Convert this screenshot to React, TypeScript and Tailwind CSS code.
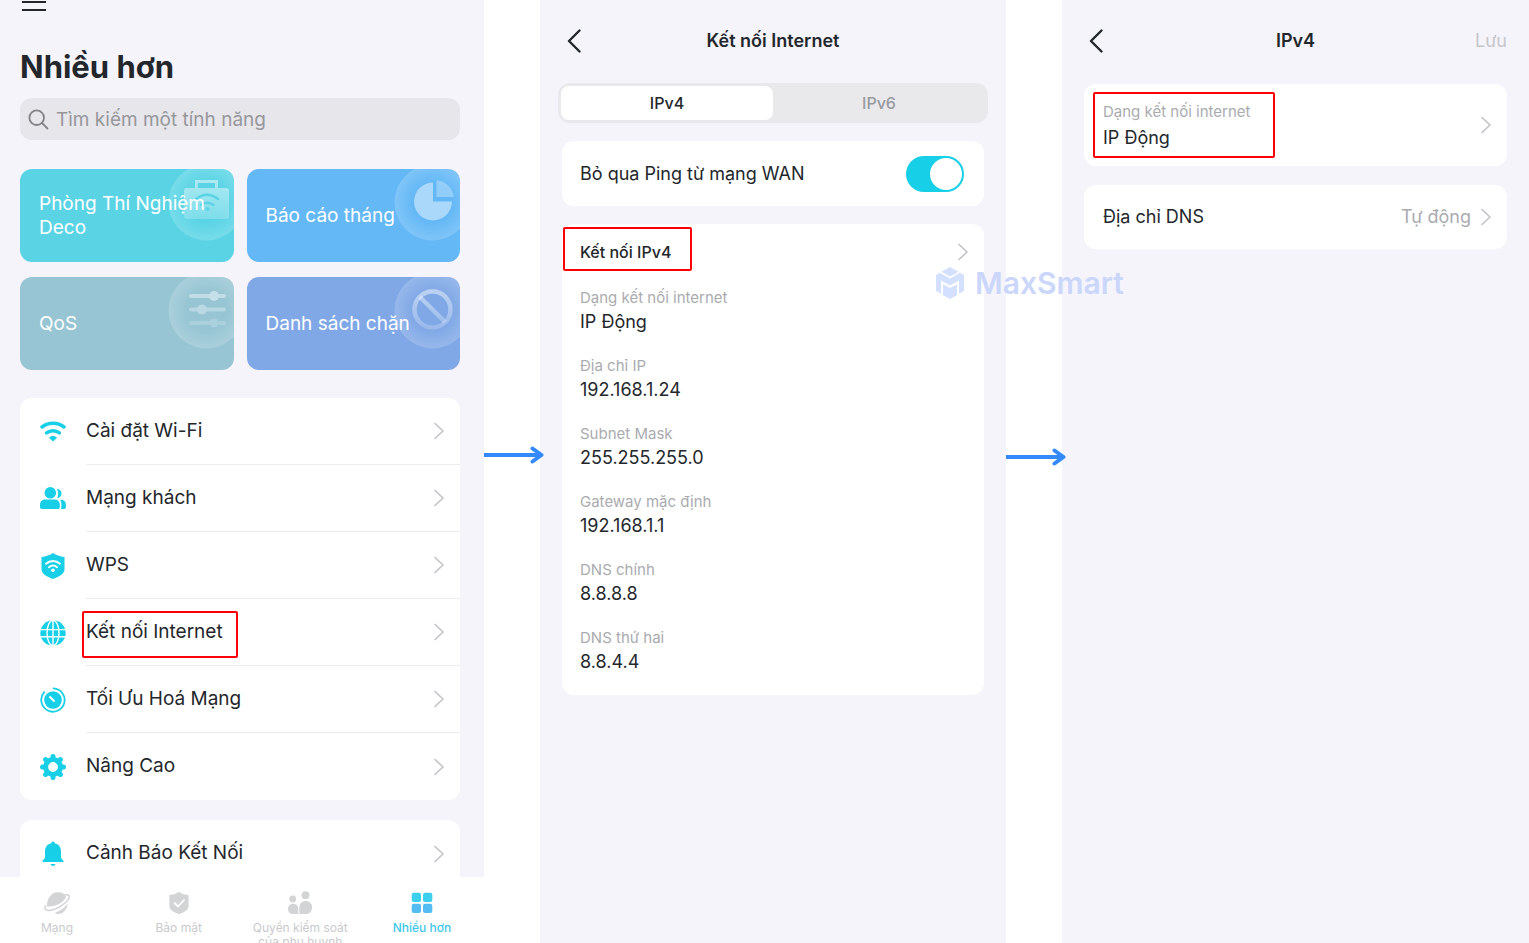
import { useState } from 'react';
import type { ReactNode } from 'react';
import clsx from 'clsx';

const Chevron = () => (
    <svg viewBox="0 0 10 18" className="w-2.5 h-[18px] shrink-0" fill="none" stroke="#c4c4c8" strokeWidth="1.7" aria-hidden="true">
        <path d="M1 1.500 9 9l-8 7.500" strokeLinecap="round" strokeLinejoin="round" />
    </svg>
);

const BackIcon = () => (
    <svg viewBox="0 0 14 24" className="w-3.5 h-6" fill="none" stroke="#23272b" strokeWidth="2.4" aria-hidden="true">
        <path d="M12.500 1.500 2 12l10.500 10.500" strokeLinecap="round" strokeLinejoin="round" />
    </svg>
);

const Arrow = () => (
    <svg viewBox="0 0 60 18" className="w-[60px] h-[18px] shrink-0" fill="none" stroke="#348afd" strokeWidth="4" aria-hidden="true">
        <path d="M0 9h56" />
        <path d="M48.500 2.500 57.500 9l-9 6.500" strokeLinecap="round" strokeLinejoin="round" />
    </svg>
);

/* Red marker drawn over the step to follow */
const Marker = ({ className }: { className: string }) => (
    <span className={clsx('absolute border-2 border-[#fb0007] rounded-[2px] pointer-events-none', className)} />
);

/* ---------- Row icons ---------- */

const RowIcon = ({ children }: { children: ReactNode }) => (
    <svg viewBox="0 0 26 26" className="w-[26px] h-[26px] shrink-0" fill="#17cfe6" aria-hidden="true">
        {children}
    </svg>
);

const WifiIcon = () => (
    <RowIcon>
        <g fill="none" stroke="#17cfe6" strokeWidth="3.500" strokeLinecap="round">
            <path d="M2 8c6.400-5 15.600-5 22 0" />
            <path d="M6.600 13.800c3.700-2.900 9.100-2.900 12.800 0" />
        </g>
        <path d="M9 18.800c2.300-2.300 5.700-2.300 8 0L13 22.500z" />
    </RowIcon>
);

const GuestIcon = () => (
    <RowIcon>
        <circle cx="10.300" cy="6.800" r="5.800" />
        <path d="M0 18.700C0 15.200 2.500 13.400 5.500 13.400h9c3 0 5.300 1.800 5.300 5.300V21c0 1.200-.6 1.900-1.800 1.900H1.800C.6 22.900 0 22.200 0 21z" />
        <path d="M16.800 2.800c2.700.2 4.700 2 4.700 4.600s-1.800 4.600-4.500 4.900c1.600-3 1.800-6.200-.2-9.500z" />
        <path d="M20 13.800c3.600-.2 5.900 1.700 5.900 4.900V21c0 1.200-.6 1.900-1.800 1.900H21c.6-3 .9-6.500-1-9.100z" />
    </RowIcon>
);

const WpsIcon = () => (
    <RowIcon>
        <path d="M13 0c3 2 7 3.500 11.500 3.900v12.600c0 4.500-6 7.500-11.500 9.500-5.500-2-11.500-5-11.500-9.500V3.900C6 3.500 10 2 13 0z" />
        <g fill="none" stroke="#fff" strokeWidth="2" strokeLinecap="round">
            <path d="M6 10.700c4.100-3.700 9.900-3.700 14 0" />
            <path d="M9 14.200c2.400-2.100 5.600-2.100 8 0" />
        </g>
        <circle cx="13" cy="17.300" r="1.800" fill="#fff" />
    </RowIcon>
);

const GlobeIcon = () => (
    <RowIcon>
        <circle cx="13" cy="13" r="12.700" />
        <g fill="none" stroke="#fff" strokeWidth="1.400">
            <ellipse cx="13" cy="13" rx="6" ry="12.800" />
            <path d="M13 0v26M0 9.600h26M0 16.800h26" />
        </g>
    </RowIcon>
);

const OptimizeIcon = () => (
    <RowIcon>
        <circle cx="13" cy="13" r="8.800" />
        <path d="M4.200 5.200A11.700 11.700 0 1 0 13.500 1.300" fill="none" stroke="#17cfe6" strokeWidth="1.800" strokeLinecap="round" />
        <path d="m10 10 4 4" stroke="#fff" strokeWidth="1.900" strokeLinecap="round" />
    </RowIcon>
);

const GearIcon = () => (
    <RowIcon>
        <circle cx="13" cy="13" r="7.400" fill="none" stroke="#17cfe6" strokeWidth="5" />
        <path
            d="M13 2.500v3M13 20.500v3M2.500 13h3M20.500 13h3M5.600 5.600l2.200 2.200M18.200 18.200l2.200 2.200M5.600 20.400l2.200-2.200M18.200 7.800l2.200-2.200"
            stroke="#17cfe6"
            strokeWidth="5"
            strokeLinecap="round"
        />
    </RowIcon>
);

const BellIcon = () => (
    <RowIcon>
        <path d="M13 .5c1 0 1.700.7 1.700 1.700 4 .9 6.300 3.900 6.300 8.300v6c0 1.500 2.600 2.500 2.600 4 0 .4-.3.600-.8.600H3.200c-.5 0-.8-.2-.8-.6 0-1.500 2.600-2.500 2.600-4v-6c0-4.400 2.300-7.400 6.300-8.300 0-1 .7-1.700 1.700-1.700z" />
        <path d="M10.500 23h5c-.4 1.300-1.200 2-2.500 2s-2.100-.7-2.500-2z" />
    </RowIcon>
);

/* ---------- Feature tiles ---------- */

const TileArt = ({ id, children }: { id: string; children: ReactNode }) => (
    <svg viewBox="0 0 66 76" className="absolute top-0 right-0 w-[66px] h-[76px]" fill="none" aria-hidden="true">
        <defs>
            <radialGradient id={id}>
                <stop offset="0.5" stopColor="#fff" stopOpacity="0" />
                <stop offset="1" stopColor="#fff" stopOpacity="0.18" />
            </radialGradient>
            <linearGradient id={`${id}-fade`} gradientUnits="userSpaceOnUse" x1="0" y1="10" x2="0" y2="52">
                <stop offset="0" stopColor="#fff" stopOpacity="0.5" />
                <stop offset="1" stopColor="#fff" stopOpacity="0.2" />
            </linearGradient>
        </defs>
        <circle cx="38.500" cy="33.500" r="38" fill={`url(#${id})`} />
        {children}
    </svg>
);

const tiles = [
    {
        label: 'Phòng Thí Nghiệm Deco',
        color: 'bg-[#5ad4e5]',
        art: (
            <TileArt id="lab">
                <path d="M28.500 19v-6.500h20V19" stroke="url(#lab-fade)" strokeWidth="3" />
                <rect x="16" y="19" width="45" height="31" rx="3" fill="url(#lab-fade)" />
                <g stroke="#5ad4e5" strokeWidth="2.500" strokeLinecap="round">
                    <path d="M28 30c7-5.500 15-5.500 22 0" />
                    <path d="M33 36c4-3 8.500-3 12.500 0" />
                </g>
                <circle cx="39.500" cy="40" r="2" fill="#5ad4e5" />
            </TileArt>
        ),
    },
    {
        label: 'Báo cáo tháng',
        color: 'bg-[#64b8f6]',
        art: (
            <TileArt id="report">
                <path d="M39 13.500A19 19 0 1 0 58 32.500H39z" fill="#fff" fillOpacity="0.45" />
                <path d="M42.500 11.500C51 11.500 59 19 59.500 28h-17z" fill="#fff" fillOpacity="0.3" />
            </TileArt>
        ),
    },
    {
        label: 'QoS',
        color: 'bg-[#97c5d3]',
        art: (
            <TileArt id="qos">
                <g stroke="#fff" strokeOpacity="0.4" strokeWidth="4" strokeLinecap="round">
                    <path d="M23 19h33" />
                    <path d="M23 32.500h33" strokeOpacity="0.3" />
                    <path d="M23 46h33" strokeOpacity="0.2" />
                </g>
                <circle cx="46" cy="19" r="5" fill="#c6e0ea" />
                <circle cx="34" cy="32.500" r="5" fill="#bad9e4" />
                <circle cx="46" cy="46" r="4.500" fill="#abd0de" />
            </TileArt>
        ),
    },
    {
        label: 'Danh sách chặn',
        color: 'bg-[#80a8e6]',
        art: (
            <TileArt id="block">
                <g stroke="url(#block-fade)" strokeWidth="4.500">
                    <circle cx="38.500" cy="32.500" r="18" />
                    <path d="m26 20 25 25" />
                </g>
            </TileArt>
        ),
    },
];

const features = [
    { label: 'Cài đặt Wi-Fi', icon: <WifiIcon /> },
    { label: 'Mạng khách', icon: <GuestIcon /> },
    { label: 'WPS', icon: <WpsIcon /> },
    { label: 'Kết nối Internet', icon: <GlobeIcon />, marked: true },
    { label: 'Tối Ưu Hoá Mạng', icon: <OptimizeIcon /> },
    { label: 'Nâng Cao', icon: <GearIcon /> },
];

interface FeatureRowProps {
    label: string;
    icon: ReactNode;
    marked?: boolean;
}

const FeatureRow = ({ label, icon, marked }: FeatureRowProps) => (
    <li className="group">
        <a href="#" className="flex items-center pl-5 gap-5">
            {icon}
            <span className="relative flex flex-1 items-center justify-between h-[67px] pr-4 border-b border-[#ececf0] group-last:border-b-0">
                {label}
                <Chevron />
                {marked && <Marker className="-left-1 top-3 w-[156px] h-[47px]" />}
            </span>
        </a>
    </li>
);

/* ---------- Bottom navigation ---------- */

const NavIcon = ({ children }: { children: ReactNode }) => (
    <svg viewBox="0 0 26 24" className="w-[26px] h-6" fill="#d3d4d6" aria-hidden="true">
        {children}
    </svg>
);

const navItems = [
    {
        label: 'Mạng',
        icon: (
            <NavIcon>
                <path d="M3.200 15.500C2.200 7.500 7.500 1.200 14 1.200c3.700 0 6.500 1.500 8.200 4C20.500 11 12 16 3.200 15.500z" />
                <path d="M11 21.700c5-1.500 10-5 12.500-9.200-.2 6-4.500 10.500-9.500 10.500-1.200 0-2.300-.4-3-1.300z" />
                <path d="M21.500 3.700c3-.2 4.500.9 3.500 3.300C23 12 12.500 19 5.500 19.400c-4.200.2-5.500-1.600-3.800-4.600" fill="none" stroke="#fff" strokeWidth="3.500" />
                <path d="M21.500 3.700c3-.2 4.500.9 3.500 3.300C23 12 12.500 19 5.500 19.400c-4.200.2-5.500-1.600-3.800-4.600" fill="none" stroke="#d3d4d6" strokeWidth="1.500" strokeLinecap="round" />
            </NavIcon>
        ),
    },
    {
        label: 'Bảo mật',
        icon: (
            <NavIcon>
                <path d="M13 1c3 2 6.500 2.800 9.600 3v11c0 4.200-5 6.700-9.600 8-4.600-1.300-9.600-3.800-9.600-8V4C6.500 3.800 10 3 13 1z" />
                <path d="m8.500 12 3.500 3.500 6-6.500" fill="none" stroke="#fff" strokeWidth="1.800" strokeLinecap="round" />
            </NavIcon>
        ),
    },
    {
        label: 'Quyền kiểm soát của phụ huynh',
        icon: (
            <NavIcon>
                <circle cx="18.500" cy="4.200" r="4" />
                <circle cx="5.700" cy="8" r="3.400" />
                <path d="M12.300 16.500c0-3.800 2.800-6.500 6.400-6.500s6.400 2.700 6.400 6.300-2.300 6.700-5.700 6.700h-7.100z" />
                <path d="M11.300 18c0-3-2-5.200-5-5.200S1 15 1 18s2 5 5 5h5.300z" />
            </NavIcon>
        ),
    },
    {
        label: 'Nhiều hơn',
        active: true,
        icon: (
            <NavIcon>
                <g fill="#3dd0ee">
                    <rect x="2.700" y="1.700" width="9.300" height="9.300" rx="2" />
                    <rect x="14" y="1.700" width="9.300" height="9.300" rx="2" />
                </g>
                <g fill="#53bdf3">
                    <rect x="2.700" y="12.700" width="9.300" height="9.300" rx="2" />
                    <rect x="14" y="12.700" width="9.300" height="9.300" rx="2" />
                </g>
            </NavIcon>
        ),
    },
];

const MoreScreen = () => (
    <section className="flex flex-col h-screen overflow-hidden bg-[#f5f4fb] text-[19px]">
        <div className="flex-1 overflow-hidden px-5 pr-6">
            <button type="button" aria-label="Menu" className="block h-11 w-7 -mt-8 pl-0.5 pt-6">
                <svg viewBox="0 0 24 20" className="w-6 h-5" stroke="#23272b" strokeWidth="2" aria-hidden="true">
                    <path d="M0 2h24M0 10h24M0 18h24" />
                </svg>
            </button>
            <h1 className="mt-[34px] text-[31px] leading-[42px] font-bold">Nhiều hơn</h1>
            <label className="flex items-center gap-[7px] mt-2.5 px-2 h-[42px] rounded-xl bg-[#e7e6eb]">
                <svg viewBox="0 0 21 21" className="w-[21px] h-[21px] shrink-0" fill="none" stroke="#838488" strokeWidth="1.800" strokeLinecap="round" aria-hidden="true">
                    <circle cx="8.700" cy="8.700" r="7.300" />
                    <path d="m14 14 5.500 5.500" />
                </svg>
                <input
                    type="search"
                    aria-label="Tìm kiếm một tính năng"
                    placeholder="Tìm kiếm một tính năng"
                    className="w-full pt-0.5 bg-transparent outline-none placeholder:text-[#96979b]"
                />
            </label>

            <div className="grid grid-cols-2 gap-x-[13px] gap-y-[15px] mt-[29px]">
                {tiles.map((tile) => (
                    <button
                        key={tile.label}
                        type="button"
                        className={clsx('relative flex items-center h-[93px] pt-px pl-[19px] pr-5 overflow-hidden rounded-xl text-left leading-6 text-white', tile.color)}
                    >
                        {tile.art}
                        <span className="relative">{tile.label}</span>
                    </button>
                ))}
            </div>

            <ul className="mt-7 rounded-xl bg-white">
                {features.map((feature) => (
                    <FeatureRow key={feature.label} {...feature} />
                ))}
            </ul>
            <ul className="mt-5 rounded-xl bg-white">
                <FeatureRow label="Cảnh Báo Kết Nối" icon={<BellIcon />} />
            </ul>
        </div>

        <nav className="flex items-start justify-between h-[66px] pl-px pr-1.5 pt-3.5 overflow-hidden bg-white">
            {navItems.map((item) => (
                <a
                    key={item.label}
                    href="#"
                    className={clsx(
                        'flex flex-col items-center gap-1.5 w-28 text-center text-xs leading-[14px]',
                        item.active ? 'font-medium text-[#3fc8e8]' : 'text-[#c9cacd]'
                    )}
                >
                    {item.icon}
                    {item.label}
                </a>
            ))}
        </nav>
    </section>
);

const details = [
    { label: 'Dạng kết nối internet', value: 'IP Động' },
    { label: 'Địa chỉ IP', value: '192.168.1.24' },
    { label: 'Subnet Mask', value: '255.255.255.0' },
    { label: 'Gateway mặc định', value: '192.168.1.1' },
    { label: 'DNS chính', value: '8.8.8.8' },
    { label: 'DNS thứ hai', value: '8.8.4.4' },
];

const ScreenHeader = ({ title, action }: { title: string; action?: ReactNode }) => (
    <header className="grid grid-cols-[1fr_auto_1fr] items-center h-20 pt-0.5">
        <button type="button" aria-label="Quay lại" className="justify-self-start pl-[5px]">
            <BackIcon />
        </button>
        <h2 className="font-semibold">{title}</h2>
        <div className="justify-self-end">{action}</div>
    </header>
);

const ConnectionScreen = () => {
    const [tab, setTab] = useState('IPv4');
    const [ping, setPing] = useState(true);

    return (
        <section className="bg-[#f5f4fb] px-[22px] text-lg">
            <ScreenHeader title="Kết nối Internet" />
            <div role="tablist" className="grid grid-cols-2 -mx-1 mt-[3px] p-[3px] h-10 rounded-xl bg-[#e9e9ec]">
                {['IPv4', 'IPv6'].map((name) => (
                    <button
                        key={name}
                        type="button"
                        role="tab"
                        aria-selected={tab === name}
                        onClick={() => setTab(name)}
                        className={clsx('rounded-lg text-base font-medium', tab === name ? 'bg-white' : 'text-[#96999e]')}
                    >
                        {name}
                    </button>
                ))}
            </div>

            <label className="flex items-center justify-between mt-[18px] h-[65px] pl-[18px] pr-5 rounded-xl bg-white">
                Bỏ qua Ping từ mạng WAN
                <span className="relative flex">
                    <input
                        type="checkbox"
                        role="switch"
                        checked={ping}
                        onChange={(e) => setPing(e.target.checked)}
                        className="peer appearance-none w-[58px] h-9 rounded-full bg-[#dcdce0] checked:bg-[#17cfe6]"
                    />
                    <span className="absolute top-0.5 left-0.5 size-8 rounded-full bg-white pointer-events-none peer-checked:left-6" />
                </span>
            </label>

            <div className="mt-[18px] pb-[21px] rounded-xl bg-white">
                <a href="#" className="relative flex items-center justify-between h-14 pl-[18px] pr-4 text-base font-medium">
                    Kết nối IPv4
                    <Chevron />
                    <Marker className="left-px top-[3px] w-[129px] h-11" />
                </a>
                <dl className="flex flex-col gap-5 pl-[18px] pt-1.5">
                    {details.map((item) => (
                        <div key={item.label}>
                            <dt className="text-[15px] leading-6 text-[#aaabaf]">{item.label}</dt>
                            <dd className="leading-6">{item.value}</dd>
                        </div>
                    ))}
                </dl>
            </div>
        </section>
    );
};

const Ipv4Screen = () => (
    <section className="bg-[#f5f4fb] px-[22px] text-lg">
        <ScreenHeader title="IPv4" action={<button type="button" className="text-[#c6c6cb]">Lưu</button>} />
        <a href="#" className="relative flex items-center justify-between mt-1 h-[82px] pl-[19px] pr-4 rounded-xl bg-white">
            <span className="flex flex-col">
                <span className="text-[15px] leading-[26px] text-[#aaabaf]">Dạng kết nối internet</span>
                <span className="leading-[26px]">IP Động</span>
            </span>
            <Chevron />
            <Marker className="left-[9px] top-2 w-[182px] h-[66px]" />
        </a>
        <a href="#" className="flex items-center justify-between mt-[19px] h-16 pl-[19px] pr-4 rounded-xl bg-white">
            Địa chỉ DNS
            <span className="flex items-center gap-2.5 text-[#aaabaf]">
                Tự động
                <Chevron />
            </span>
        </a>
    </section>
);

const Watermark = () => (
    <div className="absolute left-[935px] top-[267px] flex items-center gap-2.5 pointer-events-none">
        <svg viewBox="0 0 30 32" className="w-[30px] h-8" fill="#d3e0ff" aria-hidden="true">
            <path d="M15 0 23.500 4.800 15 9.600 6.500 4.800z" />
            <path d="M4.800 5.800 15 11.500 25.200 5.800 29 8v16l-5 2.700V13.500L15 18.500 6 13.500v13.200L1 24V8z" />
            <path d="M8 17.300 15 21l7-3.700v11L15 32l-7-3.700z" />
        </svg>
        <span className="text-[30px] leading-8 font-semibold text-[#cbd6fb]">MaxSmart</span>
    </div>
);

const App = () => {
    return (
        <main className="relative grid grid-cols-[484fr_56px_466fr_56px_467fr] min-h-screen bg-white text-[#23272b] font-['Inter',sans-serif]">
            <MoreScreen />
            <div className="relative z-10 pt-[446px]">
                <Arrow />
            </div>
            <ConnectionScreen />
            <div className="relative z-10 pt-[448px]">
                <Arrow />
            </div>
            <Ipv4Screen />
            <Watermark />
        </main>
    );
};

export default App;
